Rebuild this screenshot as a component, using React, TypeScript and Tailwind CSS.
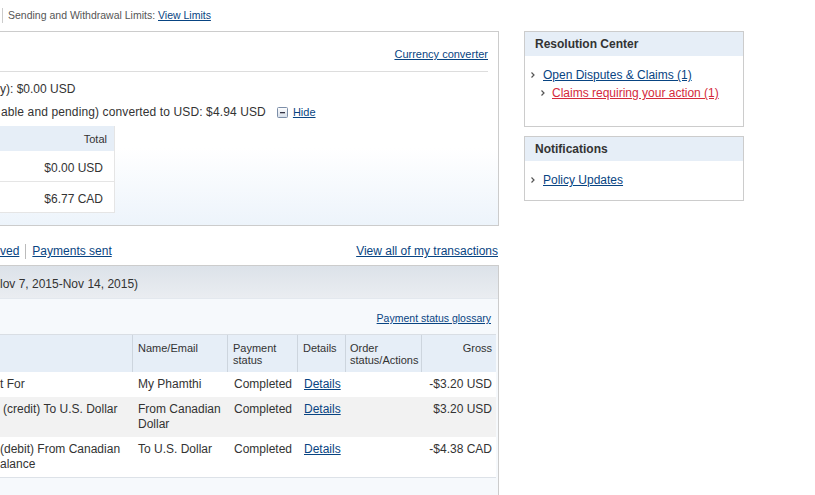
const link = "text-[#084482] underline"

function Arrow({ className = "" }: { className?: string }) {
  return (
    <svg width="4" height="6" viewBox="0 0 4 6" className={className}>
      <path d="M0.5 0.5 L3 3 L0.5 5.5" fill="none" stroke="#555" strokeWidth="1.2" />
    </svg>
  )
}

function HideIcon() {
  return (
    <svg width="11" height="11" viewBox="0 0 11 11" className="mr-[5px]">
      <defs>
        <linearGradient id="hg" x1="0" y1="0" x2="0" y2="1">
          <stop offset="0" stopColor="#ffffff" />
          <stop offset="1" stopColor="#d5dde8" />
        </linearGradient>
      </defs>
      <rect x="0.5" y="0.5" width="10" height="10" rx="1" fill="url(#hg)" stroke="#7c8ea8" />
      <rect x="3" y="5" width="5" height="1.3" fill="#334" />
    </svg>
  )
}

function BalanceBox() {
  return (
    <div className="border-y border-r border-[#ccc] bg-gradient-to-b from-white from-60% to-[#edf4fb] pb-[12px]">
      <div className="mr-[10px] h-[40px] border-b border-[#ddd] pt-[14px] text-right text-[11px]">
        <a className={link}>Currency converter</a>
      </div>
      <div className="pt-[6px] text-[12px] leading-[23px] text-[#333]">
        <div>y): $0.00 USD</div>
        <div className="flex items-center">
          <span className="ml-[1px] mr-[11px] tracking-[0.12px]">able and pending) converted to USD: $4.94 USD</span>
          <HideIcon />
          <a className={`${link} text-[11px]`}>Hide</a>
        </div>
      </div>
      <div className="mt-[2px] w-[115px] border-r border-[#e5e5e5] text-right text-[#333]">
        <div className="h-[25px] bg-[#e6eef7] pr-[7px] pt-[5px] text-[11px]">Total</div>
        <div className="h-[31px] border-b border-[#e5e5e5] bg-white pr-[11px] pt-[8px] text-[12px]">$0.00 USD</div>
        <div className="h-[31px] border-b border-[#e5e5e5] bg-white pr-[11px] pt-[8px] text-[12px]">$6.77 CAD</div>
      </div>
    </div>
  )
}

type Row = { desc: string[]; name: string[]; gross: string; shade?: boolean; indent?: boolean }

const rows: Row[] = [
  { desc: ["t For"], name: ["My Phamthi"], gross: "-$3.20 USD" },
  { desc: ["(credit) To U.S. Dollar"], name: ["From Canadian", "Dollar"], gross: "$3.20 USD", shade: true, indent: true },
  { desc: ["(debit) From Canadian", "alance"], name: ["To U.S. Dollar"], gross: "-$4.38 CAD" },
]

function ActivityBox() {
  return (
    <div className="h-[240px] border-t border-r border-[#ccc] bg-[#f6f9fc]">
      <div className="h-[33px] border-b border-[#e3e8ee] bg-gradient-to-b from-[#dce2e9] to-[#eaedf1] pt-[9px] text-[12px] text-[#333]">
        lov 7, 2015-Nov 14, 2015)
      </div>
      <div className="h-[35px] pr-[7px] pt-[12px] text-right text-[10.5px]">
        <a className={link}>Payment status glossary</a>
      </div>
      <div className="mr-[2px] text-[12px] text-[#333]">
        <div className="flex h-[38px] border-t border-[#d9dee4] bg-[#e6eef7] text-[11px] leading-[12px]">
          <div className="w-[133px] border-r border-[#cdd5de]" />
          <div className="w-[95px] border-r border-[#cdd5de] pl-[5px] pt-[7px]">Name/Email</div>
          <div className="w-[70px] border-r border-[#cdd5de] pl-[5px] pt-[7px]">Payment<br />status</div>
          <div className="w-[48px] border-r border-[#cdd5de] pl-[5px] pt-[7px]">Details</div>
          <div className="w-[76px] border-r border-[#cdd5de] pl-[4px] pt-[7px]">Order<br />status/Actions</div>
          <div className="flex-1 pr-[4px] pt-[7px] text-right">Gross</div>
        </div>
        {rows.map((r, i) => (
          <div
            key={i}
            className={`flex py-[5px] leading-[15px] ${r.shade ? "bg-[#f2f2f2]" : "bg-white"} ${i === rows.length - 1 ? "border-b border-[#dde2e8]" : ""}`}
          >
            <div className={`w-[133px] ${r.indent ? "pl-[3px]" : ""}`}>
              {r.desc.map((d) => (<div key={d}>{d}</div>))}
            </div>
            <div className="w-[95px] pl-[5px]">
              {r.name.map((d) => (<div key={d}>{d}</div>))}
            </div>
            <div className="w-[70px] pl-[6px]">Completed</div>
            <div className="w-[48px] pl-[6px]"><a className={link}>Details</a></div>
            <div className="w-[76px]" />
            <div className="flex-1 pr-[4px] text-right">{r.gross}</div>
          </div>
        ))}
      </div>
    </div>
  )
}

function SideBox({ title, children }: { title: string; children: React.ReactNode }) {
  return (
    <div className="border border-[#ccc] bg-white">
      <div className="h-[24px] bg-[#e6eef7] pl-[10px] pt-[3px] text-[12px] font-bold text-[#333]">{title}</div>
      {children}
    </div>
  )
}

export default function App() {
  return (
    <div className="flex h-[495px] w-[815px] overflow-hidden bg-white font-['Liberation_Sans',Arial,sans-serif]">
      <div className="w-[499px] shrink-0">
        <div className="flex h-[31px] items-center text-[10.5px] text-[#555]">
          <span className="ml-[2px] mr-[5px] h-[15px] w-px bg-[#ccc]" />
          <span>Sending and Withdrawal Limits:&nbsp;</span>
          <a className={link}>View Limits</a>
        </div>
        <BalanceBox />
        <div className="flex h-[39px] items-end justify-between pb-[5px] pr-[1px] text-[12px]">
          <div className="flex items-center">
            <a className={link}>ved</a>
            <span className="mx-[6px] h-[15px] w-px bg-[#bbb]" />
            <a className={link}>Payments sent</a>
          </div>
          <a className={link}>View all of my transactions</a>
        </div>
        <ActivityBox />
      </div>
      <div className="ml-[25px] flex w-[220px] shrink-0 flex-col gap-[9px] pt-[31px]">
        <SideBox title="Resolution Center">
          <div className="pb-[24px] pt-[10px] text-[12px] leading-[18px]">
            <div className="flex items-center pl-[6px]">
              <Arrow className="mr-[8px]" />
              <a className={link}>Open Disputes &amp; Claims (1)</a>
            </div>
            <div className="flex items-center pl-[16px]">
              <Arrow className="mr-[7px]" />
              <a className="text-[#d42a3c] underline">Claims requiring your action (1)</a>
            </div>
          </div>
        </SideBox>
        <SideBox title="Notifications">
          <div className="pb-[11px] pt-[10px] text-[12px] leading-[18px]">
            <div className="flex items-center pl-[6px]">
              <Arrow className="mr-[8px]" />
              <a className={link}>Policy Updates</a>
            </div>
          </div>
        </SideBox>
      </div>
    </div>
  )
}
